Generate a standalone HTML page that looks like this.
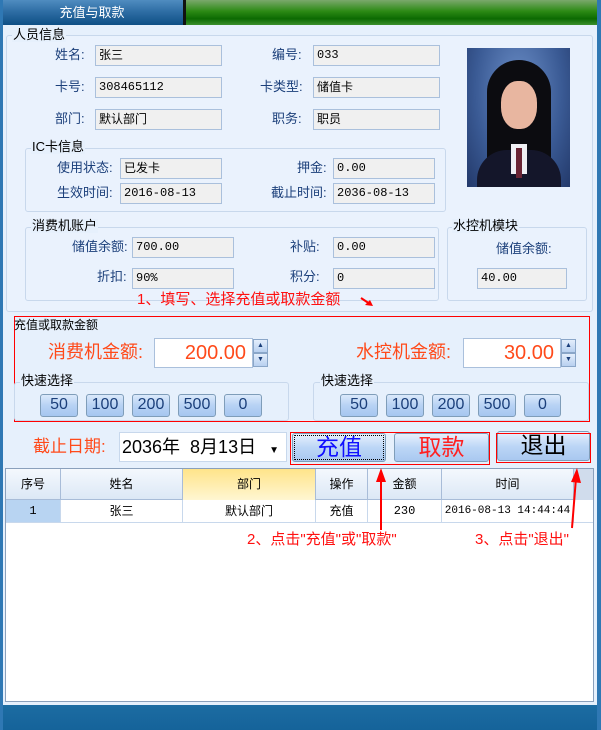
<!DOCTYPE html>
<html><head><meta charset="utf-8"><style>
*{margin:0;padding:0;box-sizing:border-box}
body{width:601px;height:730px;position:relative;overflow:hidden;background:#e6f0fc;font-family:"Liberation Sans","Noto Sans CJK SC",sans-serif;font-size:12px;color:#000}
.a{position:absolute}
.lab{position:absolute;color:#1b3f7a;font-size:13px;white-space:nowrap;line-height:16px}
.inp{position:absolute;background:#f0f0f0;border:1px solid #aac0dc;font-size:12px;line-height:18px;padding-left:3px;white-space:nowrap}
.m{font-family:"Liberation Mono","Noto Sans CJK SC",monospace;font-size:12px}
.fs{position:absolute;border:1px solid #c8d8ec;border-radius:3px}
.lg{position:absolute;background:#e6f0fc;font-size:12px;line-height:14px;padding:0 1px;white-space:nowrap}
.btn{position:absolute;border:1px solid #7f9db9;border-radius:3px;background:linear-gradient(#dbe9fb,#b7d2f4 50%,#a6c6f0);text-align:center;color:#1b3f7a;font-size:16px;line-height:20px}
.big{position:absolute;border:1px solid #7f9db9;border-radius:3px;background:linear-gradient(#e8f1fd,#bcd6f6 50%,#a9c8f0);text-align:center;font-size:23px;line-height:27px}
.rb{position:absolute;border:1px solid #ff0000}
.th{position:absolute;top:0;height:31px;line-height:31px;text-align:center;border-right:1px solid #a8bcd8;font-size:12px}
.td{position:absolute;top:31px;height:22px;line-height:22px;text-align:center;border-right:1px solid #c8d8ec;font-size:12px;white-space:nowrap}
.red{color:#ff1010;position:absolute;font-size:15px;white-space:nowrap}
.spin{position:absolute;width:15px;border:1px solid #8aa6c8;background:linear-gradient(#e4eefc,#b8d0f0);font-size:7px;line-height:12px;text-align:center;color:#1b3f7a}
</style></head><body>
<div class="a" style="left:0;top:0;width:184px;height:25px;background:linear-gradient(#4f8cc0,#2f6ea5 45%,#0e4f85);color:#fff;font-size:13px;line-height:25px;text-align:center">充值与取款</div>
<div class="a" style="left:183px;top:0;width:3px;height:25px;background:#111"></div>
<div class="a" style="left:186px;top:0;width:411px;height:25px;background:linear-gradient(#7aa86c,#2c8a14 45%,#0c6a02 75%,#3b8f2c)"></div>
<div class="a" style="left:0;top:0;width:3px;height:730px;background:#2f78b4"></div>
<div class="a" style="left:597px;top:0;width:4px;height:730px;background:#2f78b4"></div>
<div class="a" style="left:3px;top:25px;width:594px;height:680px;background:#e6f0fc"></div>

<div class="fs" style="left:6px;top:35px;width:587px;height:277px;background:#eaf2fd"></div>
<div class="lg" style="left:12px;top:28px;font-size:13px">人员信息</div>
<div class="lab" style="left:55px;top:47px">姓名:</div><div class="inp" style="left:95px;top:45px;width:127px;height:21px">张三</div>
<div class="lab" style="left:55px;top:79px">卡号:</div><div class="inp m" style="left:95px;top:77px;width:127px;height:21px">308465112</div>
<div class="lab" style="left:55px;top:111px">部门:</div><div class="inp" style="left:95px;top:109px;width:127px;height:21px">默认部门</div>
<div class="lab" style="left:272px;top:47px">编号:</div><div class="inp m" style="left:313px;top:45px;width:127px;height:21px">033</div>
<div class="lab" style="left:260px;top:79px">卡类型:</div><div class="inp" style="left:313px;top:77px;width:127px;height:21px">储值卡</div>
<div class="lab" style="left:272px;top:111px">职务:</div><div class="inp" style="left:313px;top:109px;width:127px;height:21px">职员</div>
<div class="a" style="left:467px;top:48px;width:103px;height:139px;background:radial-gradient(ellipse at 50% 30%,#6c8fc8,#3a5a94 60%,#23396a);overflow:hidden">
  <div class="a" style="left:20px;top:12px;width:64px;height:115px;border-radius:32px 32px 10px 10px;background:#0c0c10"></div>
  <div class="a" style="left:34px;top:33px;width:36px;height:48px;border-radius:45%;background:#e8b6a0"></div>
  <div class="a" style="left:10px;top:102px;width:84px;height:40px;border-radius:30px 30px 0 0;background:#14162a"></div>
  <div class="a" style="left:44px;top:96px;width:16px;height:30px;background:#f0f0f4"></div>
  <div class="a" style="left:49px;top:100px;width:6px;height:30px;background:#6a2434"></div>
</div>
<div class="fs" style="left:25px;top:148px;width:421px;height:64px"></div>
<div class="lg" style="left:31px;top:140px;font-size:13px">IC卡信息</div>
<div class="lab" style="left:57px;top:160px">使用状态:</div><div class="inp" style="left:120px;top:158px;width:102px;height:21px">已发卡</div>
<div class="lab" style="left:57px;top:185px">生效时间:</div><div class="inp m" style="left:120px;top:183px;width:102px;height:21px">2016-08-13</div>
<div class="lab" style="left:297px;top:160px">押金:</div><div class="inp m" style="left:333px;top:158px;width:102px;height:21px">0.00</div>
<div class="lab" style="left:271px;top:185px">截止时间:</div><div class="inp m" style="left:333px;top:183px;width:102px;height:21px">2036-08-13</div>
<div class="fs" style="left:25px;top:227px;width:414px;height:74px"></div>
<div class="lg" style="left:31px;top:219px;font-size:13px">消费机账户</div>
<div class="lab" style="left:72px;top:239px">储值余额:</div><div class="inp m" style="left:132px;top:237px;width:102px;height:21px">700.00</div>
<div class="lab" style="left:97px;top:269px">折扣:</div><div class="inp m" style="left:132px;top:268px;width:102px;height:21px">90%</div>
<div class="lab" style="left:290px;top:239px">补贴:</div><div class="inp m" style="left:333px;top:237px;width:102px;height:21px">0.00</div>
<div class="lab" style="left:290px;top:269px">积分:</div><div class="inp m" style="left:333px;top:268px;width:102px;height:21px">0</div>
<div class="fs" style="left:447px;top:227px;width:140px;height:74px"></div>
<div class="lg" style="left:452px;top:219px;font-size:13px">水控机模块</div>
<div class="lab" style="left:496px;top:241px">储值余额:</div><div class="inp m" style="left:477px;top:268px;width:90px;height:21px">40.00</div>
<div class="red" style="left:137px;top:288px">1、填写、选择充值或取款金额</div>
<svg class="a" style="left:360px;top:296px" width="16" height="12"><path d="M1 2 L10 8" stroke="#f00" stroke-width="2"/><path d="M13 10 L5 9 L10 4 Z" fill="#f00"/></svg>

<div class="rb" style="left:14px;top:316px;width:576px;height:106px"></div>
<div class="lg" style="left:13px;top:318px;background:none">充值或取款金额</div>
<div class="a" style="left:48px;top:341px;color:#ff4a1a;font-size:18px;line-height:22px">消费机金额:</div>
<div class="a" style="left:154px;top:338px;width:99px;height:30px;background:#fff;border:1px solid #aac0dc;color:#ff4a1a;font-size:20px;line-height:28px;text-align:right;padding-right:6px">200.00</div>
<div class="spin" style="left:253px;top:339px;height:14px">▲</div><div class="spin" style="left:253px;top:353px;height:14px">▼</div>
<div class="a" style="left:356px;top:341px;color:#ff4a1a;font-size:18px;line-height:22px">水控机金额:</div>
<div class="a" style="left:463px;top:338px;width:98px;height:30px;background:#fff;border:1px solid #aac0dc;color:#ff4a1a;font-size:20px;line-height:28px;text-align:right;padding-right:6px">30.00</div>
<div class="spin" style="left:561px;top:339px;height:14px">▲</div><div class="spin" style="left:561px;top:353px;height:14px">▼</div>
<div class="fs" style="left:14px;top:382px;width:275px;height:39px"></div>
<div class="lg" style="left:20px;top:374px;font-size:13px">快速选择</div>
<div class="fs" style="left:313px;top:382px;width:276px;height:39px"></div>
<div class="lg" style="left:320px;top:374px;font-size:13px">快速选择</div>
<div class="btn" style="left:40px;top:394px;width:38px;height:23px">50</div>
<div class="btn" style="left:86px;top:394px;width:38px;height:23px">100</div>
<div class="btn" style="left:132px;top:394px;width:38px;height:23px">200</div>
<div class="btn" style="left:178px;top:394px;width:38px;height:23px">500</div>
<div class="btn" style="left:224px;top:394px;width:38px;height:23px">0</div>
<div class="btn" style="left:340px;top:394px;width:38px;height:23px">50</div>
<div class="btn" style="left:386px;top:394px;width:38px;height:23px">100</div>
<div class="btn" style="left:432px;top:394px;width:38px;height:23px">200</div>
<div class="btn" style="left:478px;top:394px;width:38px;height:23px">500</div>
<div class="btn" style="left:524px;top:394px;width:37px;height:23px">0</div>

<div class="a" style="left:33px;top:436px;color:#ff4a1a;font-size:17px;line-height:22px">截止日期:</div>
<div class="a" style="left:119px;top:432px;width:168px;height:30px;background:#fff;border:1px solid #c8d8ec;font-size:18px;line-height:28px;padding-left:2px;white-space:nowrap">2036年&nbsp; 8月13日 <span style="font-size:10px;margin-left:8px">▼</span></div>
<div class="big" style="left:292px;top:433px;width:94px;height:29px;color:#1010ff;outline:1px dotted #000;outline-offset:-3px">充值</div>
<div class="big" style="left:394px;top:433px;width:95px;height:29px;color:#ff2020">取款</div>
<div class="big" style="left:497px;top:431px;width:93px;height:30px;color:#000">退出</div>
<div class="rb" style="left:290px;top:432px;width:200px;height:33px"></div>
<div class="rb" style="left:496px;top:433px;width:95px;height:30px"></div>

<div class="a" style="left:5px;top:468px;width:589px;height:234px;background:#fff;border:1px solid #8aa0bc">
  <div class="a" style="left:0;top:0;width:587px;height:31px;background:linear-gradient(#f4f8fd,#dce8f6);border-bottom:1px solid #a8bcd8"></div>
  <div class="th" style="left:0;width:55px">序号</div>
  <div class="th" style="left:55px;width:122px">姓名</div>
  <div class="th" style="left:177px;width:133px;background:linear-gradient(#ffe48a,#fff6d2)">部门</div>
  <div class="th" style="left:310px;width:52px">操作</div>
  <div class="th" style="left:362px;width:74px">金额</div>
  <div class="th" style="left:436px;width:132px">时间</div>
  <div class="th" style="left:568px;width:19px;background:#d0dcec;border-right:none"></div>
  <div class="td m" style="left:0;width:55px;background:#b8d4f2">1</div>
  <div class="td" style="left:55px;width:122px">张三</div>
  <div class="td" style="left:177px;width:133px">默认部门</div>
  <div class="td" style="left:310px;width:52px">充值</div>
  <div class="td m" style="left:362px;width:74px">230</div>
  <div class="td m" style="left:436px;width:132px;font-size:11px">2016-08-13 14:44:44</div>
  <div class="a" style="left:0;top:53px;width:587px;height:1px;background:#c8d8ec"></div>
</div>
<svg class="a" style="left:0;top:460px" width="601" height="80">
  <path d="M381 70 L381 18" stroke="#f00" stroke-width="2"/><path d="M376 22 L381 8 L386 22 Z" fill="#f00"/>
  <path d="M572 68 L576 18" stroke="#f00" stroke-width="2"/><path d="M571 22 L577 8 L581 23 Z" fill="#f00"/>
</svg>
<div class="red" style="left:247px;top:528px">2、点击"充值"或"取款"</div>
<div class="red" style="left:475px;top:528px">3、点击"退出"</div>

<div class="a" style="left:3px;top:705px;width:594px;height:25px;background:linear-gradient(#1c6ca2,#15639a)"></div>
</body></html>
